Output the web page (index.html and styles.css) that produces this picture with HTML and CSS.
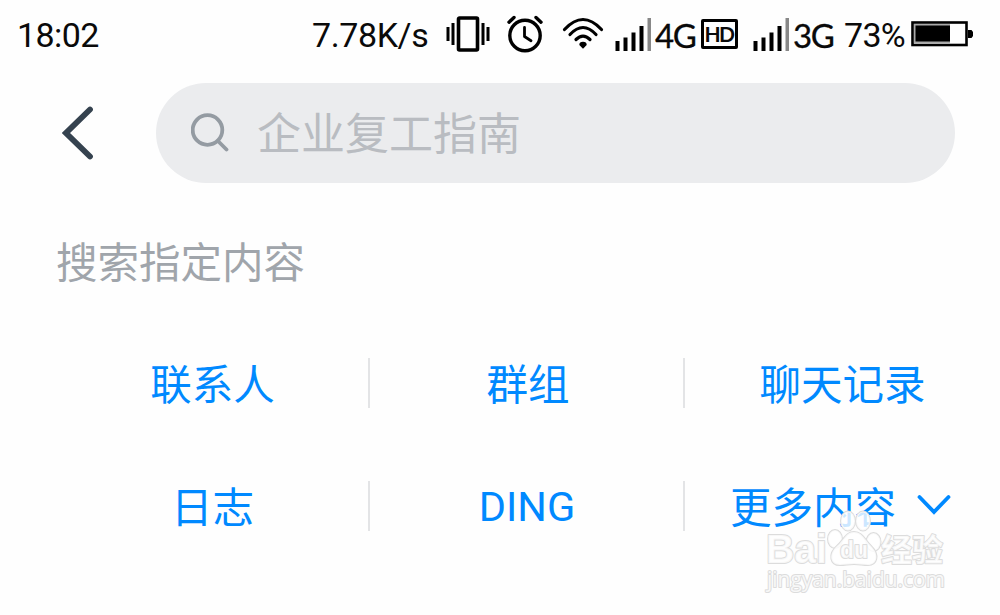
FILE: index.html
```html
<!DOCTYPE html>
<html lang="zh-CN">
  <head>
    <meta charset="UTF-8" />
    <meta name="viewport" content="width=device-width, initial-scale=1.0" />
    <title>搜索</title>
    <link rel="stylesheet" href="styles.css">
  </head>
  <body>
    <div class="status-bar">
      <span class="time">18:02</span>
      <span class="speed">7.78K/s</span>
      <svg class="vibrate" width="44" height="36" viewBox="0 0 44 36">
        <path d="M2 11v14M7 7v22M37 7v22M42 11v14" fill="none" stroke="#000" stroke-width="3" />
        <rect x="12.5" y="2" width="19" height="32" rx="1" fill="none" stroke="#000" stroke-width="3.6" />
      </svg>
      <svg class="alarm" width="38" height="38" viewBox="0 0 38 38">
        <g fill="none" stroke="#000" stroke-width="3.4" stroke-linecap="round" stroke-linejoin="round">
          <circle cx="19" cy="20.5" r="15.2" />
          <path d="M18.5 12.5v9l6.5 4.2" stroke-width="2.8" />
          <path d="M3 7.2l5-4.7M35 7.2l-5-4.7" />
        </g>
      </svg>
      <svg class="wifi" width="42" height="34" viewBox="0 0 42 34">
        <g fill="none" stroke="#000" stroke-width="3.2" stroke-linecap="round">
          <path d="M2.5 12.5Q21 -7.5 39.5 12.5" />
          <path d="M8 17.5Q21 3.5 34 17.5" />
          <path d="M14 22.5Q21 15.5 28 22.5" />
        </g>
        <path d="M17.3 28a3.7 3.2 0 0 1 7.4 0L21 31.8z" />
      </svg>
      <svg class="signal" width="37" height="33" viewBox="0 0 37 33">
        <path d="M.5 23h4v10h-4zM8.5 19.5h4V33h-4zM16.5 14.5h4V33h-4zM24.5 8h4v25h-4z" />
        <path d="M32.5 0H36v33h-3.5z" fill="#888" />
      </svg>
      <span class="network">4G</span>
      <span class="hd">HD</span>
      <svg class="signal" width="37" height="33" viewBox="0 0 37 33">
        <path d="M.5 23h4v10h-4zM8.5 19.5h4V33h-4zM16.5 14.5h4V33h-4zM24.5 8h4v25h-4z" />
        <path d="M32.5 0H36v33h-3.5z" fill="#888" />
      </svg>
      <span class="network">3G</span>
      <span class="percent">73%</span>
      <svg class="battery" width="62" height="26" viewBox="0 0 62 26">
        <rect x="1.5" y="1.5" width="54" height="22.5" fill="#fff" stroke="#000" stroke-width="2.6" />
        <path d="M3 3h36v19.5H3z" fill="#aaa" />
        <path d="M4.5 4.5H39V20.5H4.5zM57 9h3.5L62 11v4l-1.5 2H57z" />
      </svg>
    </div>

    <div class="search-bar">
      <svg class="back" width="32" height="54" viewBox="0 0 32 54">
        <path d="M28 3.5L4 27l24 23.5" fill="none" stroke="#35424f" stroke-width="5.8" stroke-linecap="round" />
      </svg>
      <div class="search-box">
        <svg width="38" height="40" viewBox="0 0 38 40">
          <g fill="none" stroke="#949ba2" stroke-width="3.8" stroke-linecap="round">
            <circle cx="16.5" cy="17" r="14.8" />
            <path d="M27 28l8.5 8.5" />
          </g>
        </svg>
        <span class="placeholder">企业复工指南</span>
      </div>
    </div>

    <h1 class="title">搜索指定内容</h1>

    <div class="categories">
      <a class="category">联系人</a>
      <a class="category">群组</a>
      <a class="category">聊天记录</a>
      <a class="category">日志</a>
      <a class="category latin">DING</a>
      <a class="category more">更多内容
        <svg width="34" height="22" viewBox="0 0 34 22">
          <path d="M2.5 3L17 18 31.5 3" fill="none" stroke="#0089ff" stroke-width="3.8" stroke-linecap="round" />
        </svg>
      </a>
    </div>

    <svg class="watermark" width="190" height="95" viewBox="0 0 190 95">
      <g class="mark">
        <text class="brand" x="6" y="60" textLength="61" lengthAdjust="spacingAndGlyphs">Bai</text>
        <ellipse cx="75" cy="36" rx="7" ry="9" />
        <ellipse cx="88" cy="18" rx="7" ry="9.5" />
        <ellipse cx="103" cy="18" rx="7" ry="9.5" />
        <ellipse cx="113.5" cy="39" rx="7" ry="9" />
        <path d="M94 29c8 0 11 8 17 14 9 9 6 19-3 19-5 0-9-1-14-1s-9 1-14 1c-10 0-12-11-3-19 7-6 9-14 17-14z" />
        <text class="du" x="80" y="55" textLength="28" lengthAdjust="spacingAndGlyphs">du</text>
        <text class="cn" x="121" y="58">经验</text>
        <text class="url" x="7" y="84" textLength="178" lengthAdjust="spacingAndGlyphs">jingyan.baidu.com</text>
      </g>
    </svg>
  </body>
</html>
```
FILE: styles.css
```css
body {
  margin: 0;
  width: 1000px;
  height: 615px;
  overflow: hidden;
  background: #fefefe;
  font-family: Roboto, "Noto Sans CJK SC", sans-serif;
}
svg {
  display: block;
  flex: none;
}
.status-bar {
  display: flex;
  align-items: center;
  height: 68px;
  padding-left: 17px;
  font-size: 34px;
  line-height: 40px;
  color: #0a0a0a;
  white-space: nowrap;
}
.status-bar span {
  flex: none;
  box-sizing: border-box;
}
.time {
  width: 295px;
  padding-top: 2px;
  letter-spacing: -0.6px;
}
.speed {
  width: 134px;
  padding-top: 2px;
  letter-spacing: -0.4px;
}
.vibrate {
  margin-right: 16px;
}
.alarm {
  margin-right: 18px;
}
.wifi {
  margin-right: 11px;
}
.signal {
  margin-right: 3px;
}
.network {
  width: 46px;
  padding-top: 1px;
  font-family: Lato, sans-serif;
  font-size: 33px;
  letter-spacing: -1.5px;
  -webkit-text-stroke: 0.3px #000;
}
.hd {
  width: 37px;
  height: 30px;
  margin-right: 15px;
  border: 3px solid #000;
  border-radius: 2px;
  font-family: Lato, sans-serif;
  font-size: 21px;
  font-weight: bold;
  line-height: 24px;
  letter-spacing: -1.5px;
  text-indent: -1px;
  text-align: center;
}
.percent {
  width: 72px;
  padding: 2px 0 0 5px;
  letter-spacing: -0.7px;
}
.search-bar {
  display: flex;
  align-items: center;
  padding: 15px 45px 0 62px;
}
.search-box {
  display: flex;
  flex: 1;
  align-items: center;
  gap: 28px;
  box-sizing: border-box;
  height: 100px;
  margin-left: 62px;
  padding-left: 35px;
  border-radius: 50px;
  background: #ebecee;
}
.placeholder {
  padding-top: 4px;
  font-size: 44px;
  line-height: 60px;
  color: #b9bcc1;
}
.title {
  margin: 50px 0 0 56px;
  font-size: 41.5px;
  font-weight: normal;
  line-height: 62px;
  color: #a0a5ab;
}
.categories {
  display: grid;
  grid-template-columns: 316px 315px 315px;
  row-gap: 73px;
  margin: 63px 0 0 54px;
}
.category {
  display: flex;
  align-items: center;
  justify-content: center;
  box-sizing: border-box;
  height: 50px;
  padding: 5px 0 0 3px;
  border-right: 2px solid #e3e4e6;
  font-size: 41.5px;
  line-height: 50px;
  color: #0089ff;
}
.latin {
  padding: 2px 0 0 1px;
}
.category:nth-child(3n) {
  padding-left: 0;
  border-right: none;
}
.category.more {
  gap: 21px;
  padding-right: 4px;
}
.more svg {
  margin-bottom: 7px;
}
.watermark {
  position: absolute;
  left: 760px;
  top: 503px;
}
.mark {
  fill: rgba(255, 255, 255, 0.8);
  stroke: #dcdcdc;
  stroke-width: 2px;
  stroke-linejoin: round;
  paint-order: stroke;
}
.brand,
.du {
  font-family: "Liberation Sans", Arial, sans-serif;
  font-weight: bold;
}
.brand {
  font-size: 41px;
}
.du {
  font-size: 24px;
}
.cn {
  font-family: "Noto Sans CJK SC", sans-serif;
  font-size: 31px;
  font-weight: bold;
}
.url {
  font-family: "Open Sans", sans-serif;
  font-size: 21px;
}
```
